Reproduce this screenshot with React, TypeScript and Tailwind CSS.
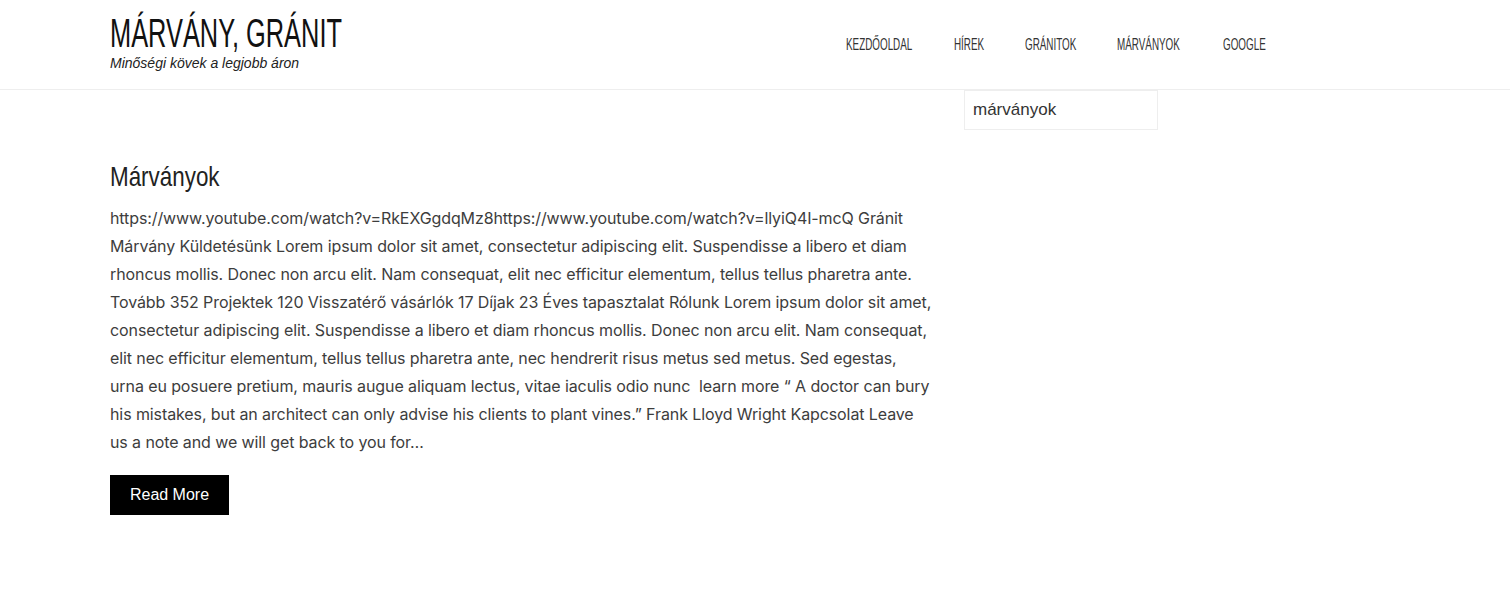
import * as React from "react";

const navItems = [
	{ label: "Kezdőoldal", w: "w-[67px]", ml: "ml-0" },
	{ label: "Hírek", w: "w-[31px]", ml: "ml-[41px]" },
	{ label: "Gránitok", w: "w-[52px]", ml: "ml-[40px]" },
	{ label: "Márványok", w: "w-[65px]", ml: "ml-[40px]" },
	{ label: "Google", w: "w-[41px]", ml: "ml-[41px]" },
];

const lines = [
	"https://www.youtube.com/watch?v=RkEXGgdqMz8https://www.youtube.com/watch?v=llyiQ4I-mcQ Gránit",
	"Márvány Küldetésünk Lorem ipsum dolor sit amet, consectetur adipiscing elit. Suspendisse a libero et diam",
	"rhoncus mollis. Donec non arcu elit. Nam consequat, elit nec efficitur elementum, tellus tellus pharetra ante.",
	"Tovább 352 Projektek 120 Visszatérő vásárlók 17 Díjak 23 Éves tapasztalat Rólunk Lorem ipsum dolor sit amet,",
	"consectetur adipiscing elit. Suspendisse a libero et diam rhoncus mollis. Donec non arcu elit. Nam consequat,",
	"elit nec efficitur elementum, tellus tellus pharetra ante, nec hendrerit risus metus sed metus. Sed egestas,",
	"urna eu posuere pretium, mauris augue aliquam lectus, vitae iaculis odio nunc  learn more “ A doctor can bury",
	"his mistakes, but an architect can only advise his clients to plant vines.” Frank Lloyd Wright Kapcsolat Leave",
	"us a note and we will get back to you for…",
];

// condensed headline face: Arial squeezed horizontally
const cond = "inline-block origin-left whitespace-nowrap font-['Liberation_Sans',Arial,sans-serif]";

export default function App() {
	return (
		<div className="min-h-[599px] bg-white text-[#333] font-['Liberation_Sans',Arial,sans-serif]">
			<header className="h-[90px] border-b border-[#eee]">
				<div className="mx-auto flex w-[1290px] items-start">
					<div className="w-[240px] pt-[13px]">
						<h1 className="h-[40px] text-[40px] leading-[40px] text-[#111]">
							<span className={`${cond} scale-x-[0.635]`}>MÁRVÁNY, GRÁNIT</span>
						</h1>
						<p className="mt-[1px] text-[14px] italic leading-[18px] text-[#222]">
							Minőségi kövek a legjobb áron
						</p>
					</div>
					<nav className="ml-auto mr-[136px] flex pt-[35px]">
						{navItems.map((item) => (
							<a
								key={item.label}
								className={`${item.w} ${item.ml} block h-[20px] text-[17px] uppercase leading-[20px] text-[#333]`}
							>
								<span className={`${cond} scale-x-[0.58]`}>{item.label}</span>
							</a>
						))}
					</nav>
				</div>
			</header>
			<div className="mx-auto flex w-[1290px]">
				<main className="w-[820px] pt-[67px]">
					<h2 className="h-[40px] text-[28px] leading-[40px] text-[#222]">
						<span className={`${cond} scale-x-[0.8]`}>Márványok</span>
					</h2>
					<div className="mt-[7px] font-['Inter',sans-serif] text-[16px] leading-[28px] tracking-[-0.1px] text-[#3d3d3d]">
						{lines.map((l, i) => (
							<span key={i} className="block whitespace-pre">
								{l}
							</span>
						))}
					</div>
					<button className="mt-[19px] h-[40px] w-[119px] bg-black text-[16px] text-white">
						Read More
					</button>
				</main>
				<aside className="ml-[34px]">
					<div className="flex h-[40px] w-[194px] items-center border border-[#eee] px-[8px] text-[17px] text-[#333]">
						márványok
					</div>
				</aside>
			</div>
		</div>
	);
}
